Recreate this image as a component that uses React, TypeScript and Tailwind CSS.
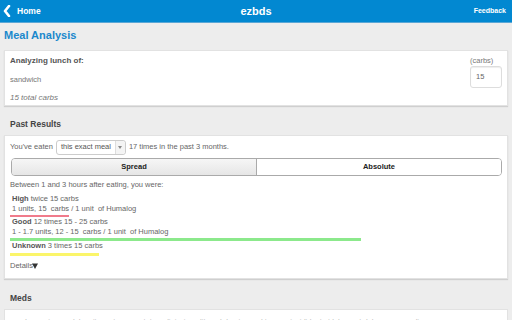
import React from "react";

export default function App() {
  return (
    <div
      className="w-[512px] h-[320px] overflow-hidden bg-[#ededed] text-[#555]"
      style={{ fontFamily: '"Liberation Sans", Arial, sans-serif' }}
    >
      {/* Header */}
      <div className="h-[23px] bg-[#0288d1] border-b border-[#5aa7d6] flex items-center relative">
        <div className="flex items-center pl-[3px] gap-[6px]">
          <svg width="8" height="12" viewBox="0 0 8 12">
            <path d="M6 1 L2 6 L6 11" stroke="white" strokeWidth="2.6" fill="none" strokeLinecap="round" strokeLinejoin="round" />
          </svg>
          <span className="text-white font-bold text-[8.5px]">Home</span>
        </div>
        <div className="absolute left-0 right-0 text-center text-white font-bold text-[11px] pointer-events-none">ezbds</div>
        <span className="ml-auto pr-[6px] text-white font-bold text-[7px]">Feedback</span>
      </div>

      <div className="px-[4px]">
        <div className="text-[#1a88cc] font-bold text-[11px] pt-[3px] h-[27px] leading-[18px]">Meal Analysis</div>

        {/* Card 1 */}
        <div className="bg-white border border-[#e2e2e2] shadow-[0_1px_1px_#cfcfcf] h-[56px] flex pl-[5px] pr-[5px]">
          <div className="flex-1 flex flex-col text-[8px]">
            <div className="font-bold text-[#555] pt-[4px] leading-[11px]">Analyzing lunch of:</div>
            <div className="text-[#777] pt-[8px] leading-[11px] text-[7.5px]">sandwich</div>
            <div className="italic text-[#777] pt-[7px] leading-[11px]">15 total carbs</div>
          </div>
          <div className="flex flex-col items-start pt-[5px]">
            <div className="text-[7.5px] text-[#777] leading-[9px]">(carbs)</div>
            <div className="w-[32px] h-[22px] border border-[#ddd] rounded-[3px] mt-[1px] text-[7.5px] text-[#666] flex items-center pl-[5px] shadow-[inset_0_1px_1px_#eee]">15</div>
          </div>
        </div>

        <div className="text-[#444] font-bold text-[8.5px] pl-[6px] pt-[11px] h-[29px] leading-[14px]">Past Results</div>

        {/* Card 2 */}
        <div className="bg-white border border-[#e2e2e2] shadow-[0_1px_1px_#cfcfcf] h-[144px] px-[5px] text-[7.5px] text-[#666]">
          <div className="flex items-center gap-[2px] pt-[3px] h-[19px]">
            <span>You've eaten</span>
            <div className="h-[15px] w-[70px] border border-[#ccc] rounded-[3px] flex items-center bg-white ml-[1px]">
              <span className="pl-[4px] flex-1 text-[#555]">this exact meal</span>
              <div className="w-[10px] h-full border-l border-[#ddd] bg-[#f4f4f4] flex items-center justify-center rounded-r-[3px]">
                <svg width="4" height="3" viewBox="0 0 4 3"><path d="M0 0 L4 0 L2 3 Z" fill="#888" /></svg>
              </div>
            </div>
            <span className="ml-[1px]">17 times in the past 3 months.</span>
          </div>

          <div className="mt-[3px] ml-[1px] h-[18px] flex border border-[#aaa] rounded-[4px] overflow-hidden text-[7.5px] font-bold text-[#222]">
            <div className="flex-1 flex items-center justify-center bg-gradient-to-b from-[#f6f6f6] to-[#e6e6e6] border-r border-[#aaa]">Spread</div>
            <div className="flex-1 flex items-center justify-center bg-white">Absolute</div>
          </div>

          <div className="pt-[3px] leading-[11px]">Between 1 and 3 hours after eating, you were:</div>

          <div className="pl-[2px] pt-[4px] leading-[10px]">
            <div><span className="font-bold text-[#555]">High</span> twice 15 carbs</div>
            <div>1 units, 15&nbsp; carbs / 1 unit&nbsp; of Humalog</div>
          </div>
          <div className="h-[2px] w-[59px] bg-[#f07b8b] mt-[1px]" />

          <div className="pl-[2px] pt-0 leading-[10px]">
            <div><span className="font-bold text-[#555]">Good</span> 12 times 15 - 25 carbs</div>
            <div>1 - 1.7 units, 12 - 15&nbsp; carbs / 1 unit&nbsp; of Humalog</div>
          </div>
          <div className="h-[3px] w-[351px] bg-[#8ce98c] mt-[1px]" />

          <div className="pl-[2px] pt-0 leading-[10px]">
            <div><span className="font-bold text-[#555]">Unknown</span> 3 times 15 carbs</div>
          </div>
          <div className="h-[3px] w-[89px] bg-[#fbf56a] mt-[2px]" />

          <div className="pt-[5px] flex items-center leading-[10px]">
            <span>Details</span>
            <svg width="6" height="6" viewBox="0 0 6 6" className="-ml-[1px]"><path d="M0 0.5 L6 0.5 L3 6 Z" fill="#333" /></svg>
          </div>
        </div>

        <div className="text-[#444] font-bold text-[8.5px] pl-[6px] pt-[12px] h-[30px] leading-[14px]">Meds</div>

        <div className="bg-white border border-[#e2e2e2] h-[40px] px-[20px] pt-[6px] text-[7.5px] text-[#bbb] whitespace-nowrap overflow-hidden">
          Lorem ipsum dolor sit amet, consectetur adipiscing elit, sed do eiusmod tempor incididunt ut labore et dolore magna aliqua.
        </div>
      </div>
    </div>
  );
}
